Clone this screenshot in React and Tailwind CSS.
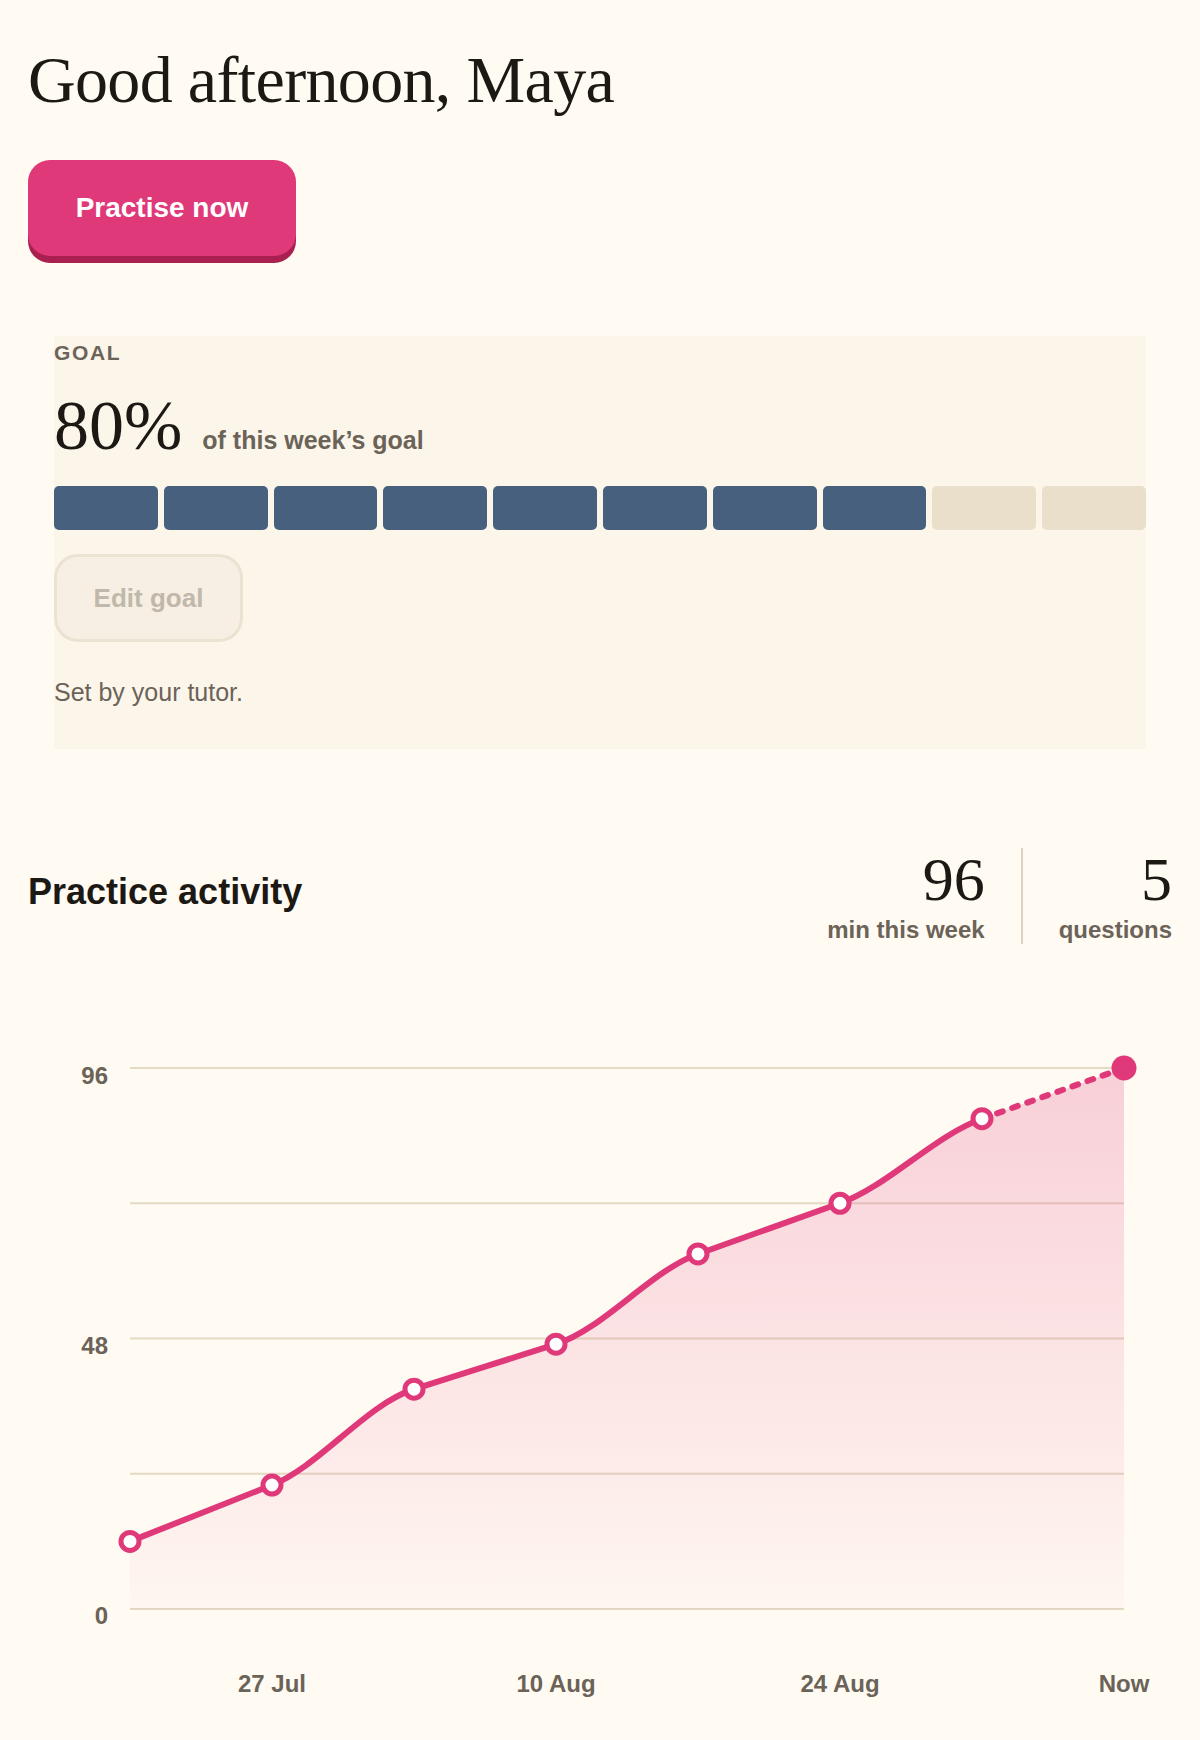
import React from "react"

const minutes = [12, 22, 39, 47, 63, 72, 87, 96]
const xLabels = [
  { i: 1, text: "27 Jul" },
  { i: 3, text: "10 Aug" },
  { i: 5, text: "24 Aug" },
  { i: 7, text: "Now" },
]

// chart is drawn in page coordinates (viewBox offset matches the svg's spot on the page)
const X0 = 130
const STEP = 142
const Y_TOP = 1068
const Y_BOTTOM = 1609
const yFor = (v) => Y_BOTTOM - (v * (Y_BOTTOM - Y_TOP)) / 96

function buildSegments(values) {
  const pts = values.map((v, i) => [X0 + i * STEP, yFor(v)])
  const n = pts.length
  const s = []
  for (let i = 0; i < n - 1; i++) s.push((pts[i + 1][1] - pts[i][1]) / STEP)
  const t = new Array(n).fill(0)
  for (let i = 1; i < n - 1; i++) {
    if (s[i - 1] * s[i] <= 0) t[i] = 0
    else t[i] = Math.sign(s[i]) * Math.min(Math.abs(s[i - 1]), Math.abs(s[i]))
  }
  t[0] = s[0]
  t[n - 1] = s[n - 2]
  const segs = []
  for (let i = 0; i < n - 1; i++) {
    const [x0, y0] = pts[i]
    const [x1, y1] = pts[i + 1]
    const h = STEP / 3
    segs.push(`C ${x0 + h} ${y0 + h * t[i]} ${x1 - h} ${y1 - h * t[i + 1]} ${x1} ${y1}`)
  }
  return { pts, segs }
}

function ActivityChart() {
  const { pts, segs } = buildSegments(minutes)
  const solid = `M ${pts[0][0]} ${pts[0][1]} ` + segs.slice(0, -1).join(" ")
  const dashed = `M ${pts[pts.length - 2][0]} ${pts[pts.length - 2][1]} ` + segs[segs.length - 1]
  const area =
    `M ${pts[0][0]} ${pts[0][1]} ` +
    segs.join(" ") +
    ` L ${pts[pts.length - 1][0]} ${Y_BOTTOM} L ${pts[0][0]} ${Y_BOTTOM} Z`
  const grid = [0, 1, 2, 3, 4].map((k) => Y_TOP + (k * (Y_BOTTOM - Y_TOP)) / 4)
  const last = pts[pts.length - 1]

  return (
    <svg
      className="mt-[96px] block"
      width="1144"
      height="680"
      viewBox="28 1040 1144 680"
      fontFamily="Liberation Sans, Arial, sans-serif"
    >
      <defs>
        <linearGradient id="areaFill" x1="0" y1={Y_TOP} x2="0" y2={Y_BOTTOM} gradientUnits="userSpaceOnUse">
          <stop offset="0" stopColor="#e0397a" stopOpacity="0.22" />
          <stop offset="1" stopColor="#e0397a" stopOpacity="0.02" />
        </linearGradient>
      </defs>
      {grid.map((y) => (
        <line key={y} x1={X0} x2={last[0]} y1={y} y2={y} stroke="#e4d9c3" strokeWidth="2" />
      ))}
      <text x="108" y="1084" textAnchor="end" fontSize="24" fontWeight="700" fill="#6b6358">96</text>
      <text x="108" y="1354" textAnchor="end" fontSize="24" fontWeight="700" fill="#6b6358">48</text>
      <text x="108" y="1624" textAnchor="end" fontSize="24" fontWeight="700" fill="#6b6358">0</text>
      <path d={area} fill="url(#areaFill)" />
      <path d={solid} fill="none" stroke="#e0397a" strokeWidth="6" strokeLinecap="round" strokeLinejoin="round" />
      <path d={dashed} fill="none" stroke="#e0397a" strokeWidth="6" strokeLinecap="round" strokeDasharray="6 10" />
      {pts.slice(0, -1).map(([x, y]) => (
        <circle key={x} cx={x} cy={y} r="9" fill="#ffffff" stroke="#e0397a" strokeWidth="5" />
      ))}
      <circle cx={last[0]} cy={last[1]} r="12.5" fill="#e0397a" />
      {xLabels.map((l) => (
        <text
          key={l.text}
          x={X0 + l.i * STEP}
          y="1692"
          textAnchor="middle"
          fontSize="24"
          fontWeight="700"
          fill="#6b6358"
        >
          {l.text}
        </text>
      ))}
    </svg>
  )
}

function Stat({ value, label, divider }) {
  return (
    <div className={`flex flex-col items-end ${divider ? "border-l-2 border-[#ddd2bf] pl-9" : "pr-9"}`}>
      <span className="font-['Liberation_Serif',serif] text-[62px] leading-none">{value}</span>
      <span className="mt-[6px] text-[24px] font-bold leading-7 text-[#6b6358]">{label}</span>
    </div>
  )
}

export default function App() {
  const filled = 8
  return (
    <div className="min-h-[1740px] bg-[#fffaf2] px-7 font-['Liberation_Sans',Arial,sans-serif] text-[#1c1915]">
      <h1 className="pt-[47px] font-['Liberation_Serif',serif] text-[66px] leading-none tracking-[-0.01em]">
        Good afternoon, Maya
      </h1>

      <button className="mt-[47px] h-[96px] w-[268px] rounded-[22px] bg-[#e0397a] text-[28px] font-bold text-white shadow-[0_7px_0_#a81f50]">
        Practise now
      </button>

      <section className="mx-[26px] mt-[80px] bg-[#fcf5ea] pt-[5px] pb-[41px]">
        <div className="text-[21px] font-bold leading-6 tracking-[0.08em] text-[#6b6358]">GOAL</div>
        <div className="mt-[26px] flex items-baseline gap-[20px]">
          <span className="font-['Liberation_Serif',serif] text-[70px] leading-none">80%</span>
          <span className="text-[25px] font-bold text-[#6b6358]">of this week’s goal</span>
        </div>
        <div className="mt-[25px] grid h-[44px] grid-cols-10 gap-[6px]">
          {Array.from({ length: 10 }).map((_, i) => (
            <div key={i} className={`rounded-[5px] ${i < filled ? "bg-[#46607e]" : "bg-[#e9dfca]"}`} />
          ))}
        </div>
        <button className="mt-[24px] h-[88px] w-[189px] rounded-[24px] border-[3px] border-[#ebe3d2] bg-[#f7efe3] text-[26px] font-bold text-[#c0b8aa]">
          Edit goal
        </button>
        <p className="mt-[34px] text-[25px] leading-8 text-[#6b6358]">Set by your tutor.</p>
      </section>

      <div className="mt-[99px] flex items-center justify-between">
        <h2 className="mb-2 text-[36px] font-bold leading-10">Practice activity</h2>
        <div className="flex">
          <Stat value="96" label="min this week" />
          <Stat value="5" label="questions" divider />
        </div>
      </div>

      <ActivityChart />
    </div>
  )
}
